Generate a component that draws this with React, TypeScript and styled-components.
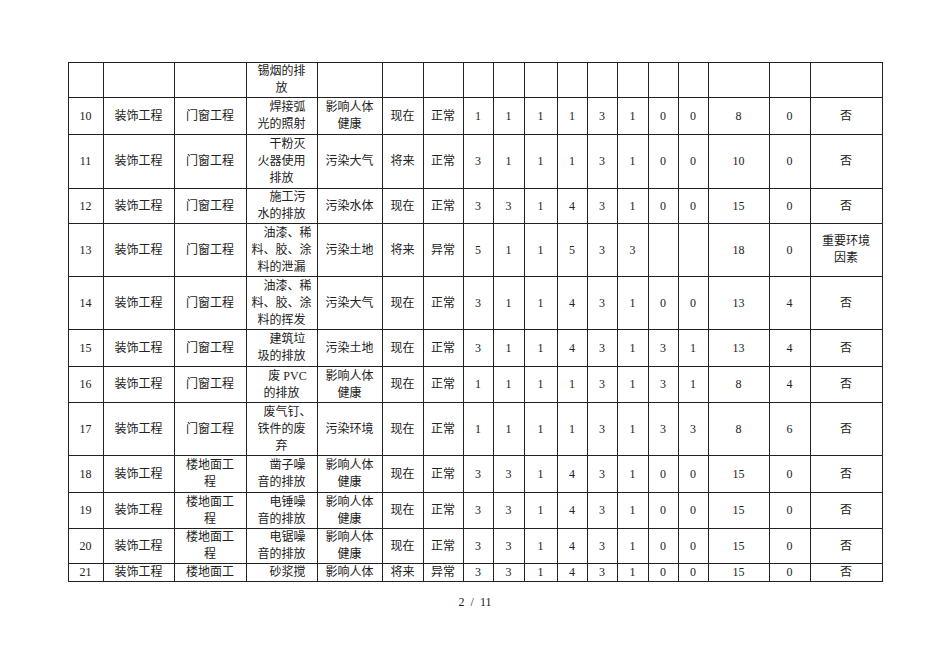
import styled, { createGlobalStyle } from "styled-components";

const GlobalStyle = createGlobalStyle`
  html, body {
    margin: 0;
    padding: 0;
    background: #ffffff;
  }
  body {
    font-family: "Liberation Serif", "Noto Sans CJK SC", serif;
    color: #222;
  }
`;

type Cell = string | string[];

interface RowData {
  height: number;
  cells: Cell[];
  // 描述列第一行是否缩进
  indent?: boolean;
  heavyTop?: boolean;
}

const colWidths = [35, 71, 72, 71, 65, 41, 40, 30, 31, 33, 30, 30, 31, 30, 30, 61, 41, 72];

const nums = (s: string) => s.split(" ").map((v) => (v === "_" ? "" : v));

const rows: RowData[] = [
  {
    height: 35,
    cells: ["", "", "", ["锡烟的排", "放"], "", "", "", "", "", "", "", "", "", "", "", "", "", ""],
  },
  {
    height: 37,
    indent: true,
    cells: ["10", "装饰工程", "门窗工程", ["焊接弧", "光的照射"], ["影响人体", "健康"], "现在", "正常", ...nums("1 1 1 1 3 1 0 0"), "8", "0", "否"],
  },
  {
    height: 54,
    indent: true,
    cells: ["11", "装饰工程", "门窗工程", ["干粉灭", "火器使用", "排放"], "污染大气", "将来", "正常", ...nums("3 1 1 1 3 1 0 0"), "10", "0", "否"],
  },
  {
    height: 35,
    indent: true,
    cells: ["12", "装饰工程", "门窗工程", ["施工污", "水的排放"], "污染水体", "现在", "正常", ...nums("3 3 1 4 3 1 0 0"), "15", "0", "否"],
  },
  {
    height: 53,
    indent: true,
    cells: ["13", "装饰工程", "门窗工程", ["油漆、稀", "料、胶、涂", "料的泄漏"], "污染土地", "将来", "异常", ...nums("5 1 1 5 3 3 _ _"), "18", "0", ["重要环境", "因素"]],
  },
  {
    height: 53,
    indent: true,
    cells: ["14", "装饰工程", "门窗工程", ["油漆、稀", "料、胶、涂", "料的挥发"], "污染大气", "现在", "正常", ...nums("3 1 1 4 3 1 0 0"), "13", "4", "否"],
  },
  {
    height: 37,
    indent: true,
    cells: ["15", "装饰工程", "门窗工程", ["建筑垃", "圾的排放"], "污染土地", "现在", "正常", ...nums("3 1 1 4 3 1 3 1"), "13", "4", "否"],
  },
  {
    height: 36,
    indent: true,
    cells: ["16", "装饰工程", "门窗工程", ["废 PVC", "的排放"], ["影响人体", "健康"], "现在", "正常", ...nums("1 1 1 1 3 1 3 1"), "8", "4", "否"],
  },
  {
    height: 53,
    indent: true,
    heavyTop: true,
    cells: ["17", "装饰工程", "门窗工程", ["废气钉、", "铁件的废", "弃"], "污染环境", "现在", "正常", ...nums("1 1 1 1 3 1 3 3"), "8", "6", "否"],
  },
  {
    height: 37,
    indent: true,
    heavyTop: true,
    cells: ["18", "装饰工程", ["楼地面工", "程"], ["凿子噪", "音的排放"], ["影响人体", "健康"], "现在", "正常", ...nums("3 3 1 4 3 1 0 0"), "15", "0", "否"],
  },
  {
    height: 36,
    indent: true,
    cells: ["19", "装饰工程", ["楼地面工", "程"], ["电锤噪", "音的排放"], ["影响人体", "健康"], "现在", "正常", ...nums("3 3 1 4 3 1 0 0"), "15", "0", "否"],
  },
  {
    height: 35,
    indent: true,
    cells: ["20", "装饰工程", ["楼地面工", "程"], ["电锯噪", "音的排放"], ["影响人体", "健康"], "现在", "正常", ...nums("3 3 1 4 3 1 0 0"), "15", "0", "否"],
  },
  {
    height: 18,
    indent: true,
    heavyTop: true,
    cells: ["21", "装饰工程", "楼地面工", ["砂浆搅"], "影响人体", "将来", "异常", ...nums("3 3 1 4 3 1 0 0"), "15", "0", "否"],
  },
];

const App = () => {
  return (
    <Page>
      <GlobalStyle />
      <Sheet>
        <colgroup>
          {colWidths.map((w, i) => (
            <col key={i} style={{ width: w }} />
          ))}
        </colgroup>
        <tbody>
          {rows.map((row, ri) => (
            <Row key={ri} $h={row.height} $heavy={row.heavyTop}>
              {row.cells.map((cell, ci) => {
                const lines = Array.isArray(cell) ? cell : [cell];
                return (
                  <Td key={ci} $grey={ci === 7 || ci === 8}>
                    {lines.map((ln, li) => (
                      <Line key={li} $indent={ci === 3 && li === 0 && !!row.indent}>
                        {ln}
                      </Line>
                    ))}
                  </Td>
                );
              })}
            </Row>
          ))}
        </tbody>
      </Sheet>
      <PageNo>2 / 11</PageNo>
    </Page>
  );
};

export default App;

const Page = styled.div`
  width: 950px;
  height: 672px;
  padding-top: 62px;
  box-sizing: border-box;
  background: #fff;
  overflow: hidden;
`;

const Sheet = styled.table`
  width: 814px;
  margin: 0 auto;
  border-collapse: collapse;
  table-layout: fixed;
  border-left: 1px solid #6a6a6a;
  border-right: 1px solid #6a6a6a;
  border-top: 1px solid #222;
  border-bottom: 1px solid #555;
`;

const Row = styled.tr<{ $h: number; $heavy?: boolean }>`
  height: ${(p) => p.$h}px;
  & > td {
    border-top: ${(p) => (p.$heavy ? "1px solid #666" : "1px solid #222")};
  }
`;

const Td = styled.td<{ $grey?: boolean }>`
  border: 1px solid #222;
  border-left: ${(p) => (p.$grey ? "1px solid #6a6a6a" : "1px solid #222")};
  padding: 0 4px;
  text-align: center;
  vertical-align: middle;
  font-size: 12px;
  line-height: 17px;
  white-space: nowrap;
  overflow: hidden;
`;

const Line = styled.div<{ $indent?: boolean }>`
  text-indent: ${(p) => (p.$indent ? "1em" : "0")};
`;

const PageNo = styled.div`
  margin-top: 12px;
  text-align: center;
  font-size: 12px;
  line-height: 16px;
  word-spacing: 3px;
  color: #222;
`;
